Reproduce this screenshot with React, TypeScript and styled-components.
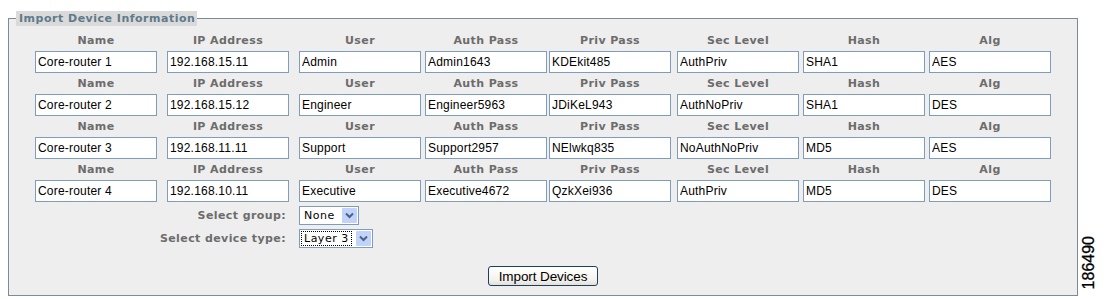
import React from "react"
import styled, { createGlobalStyle } from "styled-components"

const GlobalStyle = createGlobalStyle`
  html, body {
    margin: 0;
    padding: 0;
    background: #ffffff;
  }
  body {
    font-family: "Liberation Sans", Arial, sans-serif;
  }
`

const Page = styled.div`
  display: flex;
  align-items: flex-end;
  width: 1106px;
  height: 299px;
  padding: 11px 0 0 8px;
  box-sizing: border-box;
`

const Panel = styled.fieldset`
  width: 1070px;
  box-sizing: border-box;
  margin: 0 0 4px 0;
  padding: 4px 0 9px 26px;
  border: 1px solid #7d8b96;
  background: #eeeeee;
  align-self: flex-start;
`

const Legend = styled.legend`
  padding: 0 2px 0 3px;
  margin-left: -19px;
  background: #dadada;
  color: #5e7b8b;
  font-family: "DejaVu Sans", Verdana, sans-serif;
  font-weight: bold;
  font-size: 11px;
  line-height: 15px;
  letter-spacing: 0.5px;
`

const Grid = styled.div`
  display: grid;
  grid-template-columns: 132px 132px 126px 124px 128px 126px 126px 122px;
`

const HeadLabel = styled.div`
  width: 122px;
  height: 21px;
  line-height: 21px;
  text-align: center;
  color: #6c6c6c;
  font-family: "DejaVu Sans", Verdana, sans-serif;
  font-weight: bold;
  font-size: 11px;
  letter-spacing: 0.4px;
  white-space: nowrap;
`

const TextField = styled.input`
  width: 122px;
  height: 22px;
  box-sizing: border-box;
  margin: 0;
  padding: 0 0 0 2px;
  border: 1px solid #7f9db9;
  background: #ffffff;
  color: #000000;
  font-family: "Liberation Sans", Arial, sans-serif;
  font-size: 12px;
  letter-spacing: 0.2px;
  outline: none;
`

const OptionLabel = styled.div<{ $top: number }>`
  grid-column: 1 / 3;
  margin-top: ${(p) => p.$top}px;
  padding-right: 13px;
  text-align: right;
  align-self: center;
  color: #6c6c6c;
  font-family: "DejaVu Sans", Verdana, sans-serif;
  font-weight: bold;
  font-size: 11px;
  letter-spacing: 0.4px;
  white-space: nowrap;
`

const SelectBox = styled.div<{ $width: number; $top: number }>`
  grid-column: 3 / 4;
  margin-top: ${(p) => p.$top}px;
  width: ${(p) => p.$width}px;
  height: 19px;
  box-sizing: border-box;
  display: flex;
  align-items: center;
  justify-content: space-between;
  padding: 1px;
  border: 1px solid #7f9db9;
  background: #ffffff;
`

const SelectValue = styled.span<{ $focused?: boolean }>`
  display: flex;
  align-items: center;
  height: 15px;
  padding: 0 3px;
  outline: ${(p) => (p.$focused ? "1px dotted #000" : "none")};
  outline-offset: -1px;
  color: #000000;
  font-family: "DejaVu Sans", Verdana, sans-serif;
  font-size: 11px;
  letter-spacing: 0.5px;
`

const DropButton = styled.span`
  width: 15px;
  height: 15px;
  display: flex;
  align-items: center;
  justify-content: center;
  background: #c1d3fb;
  border-radius: 1px;
`

const ButtonRow = styled.div`
  display: flex;
  justify-content: center;
  margin: 18px 0 0 -26px;
`

const ImportButton = styled.button`
  width: 110px;
  height: 20px;
  padding: 0;
  border: 1px solid #1f3f60;
  border-radius: 3px;
  background: linear-gradient(#ffffff, #f4f3ee 70%, #e2e0d6);
  color: #000000;
  font-family: "Liberation Sans", Arial, sans-serif;
  font-size: 13.5px;
  letter-spacing: -0.1px;
`

const FigureId = styled.div`
  writing-mode: vertical-rl;
  transform: rotate(180deg);
  margin: 0 0 10px 4px;
  color: #000000;
  font-family: "Liberation Sans", Arial, sans-serif;
  font-size: 16px;
  line-height: 14px;
  -webkit-text-stroke: 0.3px #000;
`

const columns = ["Name", "IP Address", "User", "Auth Pass", "Priv Pass", "Sec Level", "Hash", "Alg"]

const devices = [
  ["Core-router 1", "192.168.15.11", "Admin", "Admin1643", "KDEkit485", "AuthPriv", "SHA1", "AES"],
  ["Core-router 2", "192.168.15.12", "Engineer", "Engineer5963", "JDiKeL943", "AuthNoPriv", "SHA1", "DES"],
  ["Core-router 3", "192.168.11.11", "Support", "Support2957", "NElwkq835", "NoAuthNoPriv", "MD5", "AES"],
  ["Core-router 4", "192.168.10.11", "Executive", "Executive4672", "QzkXei936", "AuthPriv", "MD5", "DES"],
]

function Chevron() {
  return (
    <svg width="9" height="7" viewBox="0 0 9 7">
      <path d="M1 1.5 L4.5 5 L8 1.5" fill="none" stroke="#4d6185" strokeWidth="2" />
    </svg>
  )
}

export default function App() {
  return (
    <Page>
      <GlobalStyle />
      <Panel>
        <Legend>Import Device Information</Legend>
        <Grid>
          {devices.map((row, r) => (
            <React.Fragment key={r}>
              {columns.map((c) => (
                <HeadLabel key={`h-${r}-${c}`}>{c}</HeadLabel>
              ))}
              {row.map((v, i) => (
                <TextField key={`v-${r}-${i}`} defaultValue={v} readOnly />
              ))}
            </React.Fragment>
          ))}
          <OptionLabel $top={4}>Select group:</OptionLabel>
          <SelectBox $width={60} $top={4}>
            <SelectValue>None</SelectValue>
            <DropButton>
              <Chevron />
            </DropButton>
          </SelectBox>
          <OptionLabel $top={4}>Select device type:</OptionLabel>
          <SelectBox $width={74} $top={4}>
            <SelectValue $focused>Layer 3</SelectValue>
            <DropButton>
              <Chevron />
            </DropButton>
          </SelectBox>
        </Grid>
        <ButtonRow>
          <ImportButton>Import Devices</ImportButton>
        </ButtonRow>
      </Panel>
      <FigureId>186490</FigureId>
    </Page>
  )
}
